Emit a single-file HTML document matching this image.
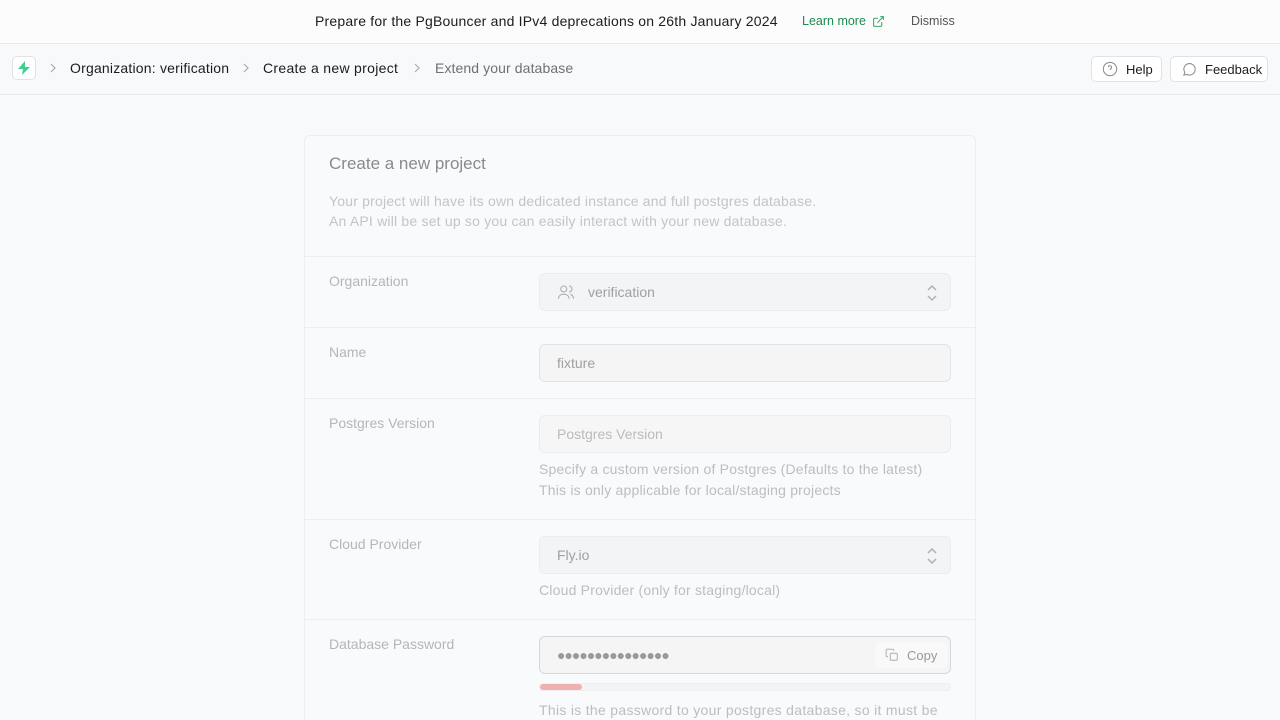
<!DOCTYPE html>
<html style="overflow:hidden;height:720px"><head><meta charset="utf-8"><style>
*{box-sizing:border-box;margin:0;padding:0}
body{width:1280px;height:720px;overflow:hidden;background:#f8f9fa;font-family:"Liberation Sans",sans-serif;color:#1c1c1c;position:relative}
.banner{position:absolute;left:0;top:0;width:1280px;height:44px;background:#fcfcfd;border-bottom:1px solid #e6e8eb}
.abs{position:absolute;white-space:nowrap}
.nav{position:absolute;left:0;top:44px;width:1280px;height:51px;border-bottom:1px solid #e6e8eb;background:#f8f9fa}
.btn{position:absolute;height:26px;border:1px solid #dfe3e6;border-radius:5px;background:#fff;font-size:13px;display:flex;align-items:center}
.card{position:absolute;left:304px;top:135px;width:672px;height:585px;overflow:hidden;border:1px solid #eceef0;border-bottom:none;border-radius:6px 6px 0 0;background:#f9fafb}
.row{position:absolute;left:0;width:670px;border-top:1px solid #eceef0}
.lbl{position:absolute;left:24px;top:16px;font-size:14px;color:#b4b6b8}
.inp{position:absolute;left:234px;width:412px;height:38px;border:1px solid #e2e3e5;border-radius:6px;background:#f5f5f6;font-size:14px;color:#a0a0a0;display:flex;align-items:center;padding-left:17px}
.help{position:absolute;left:234px;font-size:14px;color:#bbbdbf;line-height:21px}
.chev{position:absolute;right:12px;top:10px}
.bc{position:absolute;top:18px}
</style></head><body>
<div class="banner">
<div class="abs" style="left:315px;top:13px;font-size:14px;color:#1c1c1c;letter-spacing:0.2px">Prepare for the PgBouncer and IPv4 deprecations on 26th January 2024</div>
<div class="abs" style="left:802px;top:14px;font-size:12.5px;color:#1f8a52">Learn more</div>
<svg class="abs" style="left:872px;top:15px" width="13" height="13" viewBox="0 0 24 24" fill="none" stroke="#3aa76d" stroke-width="2"><path d="M18 13v6a2 2 0 0 1-2 2H5a2 2 0 0 1-2-2V8a2 2 0 0 1 2-2h6M15 3h6v6M10 14L21 3"/></svg>
<div class="abs" style="left:911px;top:14px;font-size:12.5px;color:#555">Dismiss</div>
</div>
<div class="nav">
<div class="abs" style="left:12px;top:12px;width:24px;height:24px;border:1px solid #e0e2e4;border-radius:5px;background:#fff"></div>
<svg class="abs" style="left:16px;top:16px" width="16" height="16" viewBox="0 0 16 16"><path d="M9 1L2 9h5l-1 6 8-8H9z" fill="#3ecf8e"/></svg>
<svg class="bc" style="left:48px" width="10" height="12" viewBox="0 0 10 12" fill="none" stroke="#aaa" stroke-width="1.2"><path d="M3 2l4 4-4 4"/></svg>
<div class="abs" style="left:70px;top:16px;font-size:14px;letter-spacing:0.2px">Organization: verification</div>
<svg class="bc" style="left:241px" width="10" height="12" viewBox="0 0 10 12" fill="none" stroke="#aaa" stroke-width="1.2"><path d="M3 2l4 4-4 4"/></svg>
<div class="abs" style="left:263px;top:16px;font-size:14px;letter-spacing:0.3px">Create a new project</div>
<svg class="bc" style="left:412px" width="10" height="12" viewBox="0 0 10 12" fill="none" stroke="#aaa" stroke-width="1.2"><path d="M3 2l4 4-4 4"/></svg>
<div class="abs" style="left:435px;top:16px;font-size:14px;color:#707070;letter-spacing:0.1px">Extend your database</div>
<div class="btn" style="left:1091px;top:12px;width:71px"><svg style="margin-left:10px" width="16" height="16" viewBox="0 0 24 24" fill="none" stroke="#888" stroke-width="1.5"><circle cx="12" cy="12" r="10"/><path d="M9.5 9a2.5 2.5 0 0 1 4.9.8c0 1.7-2.4 2.2-2.4 3.7M12 17h.01"/></svg><span style="margin-left:8px">Help</span></div>
<div class="btn" style="left:1170px;top:12px;width:98px"><svg style="margin-left:11px" width="15" height="15" viewBox="0 0 24 24" fill="none" stroke="#888" stroke-width="1.6"><path d="M21 12a9 9 0 0 1-13 8l-5 1 1.5-4.5A9 9 0 1 1 21 12z"/></svg><span style="margin-left:8px">Feedback</span></div>
</div>
<div class="card">
<div class="abs" style="left:24px;top:18px;font-size:17px;color:#8a8a8a">Create a new project</div>
<div class="abs" style="left:24px;top:55px;font-size:14px;color:#c2c4c6;line-height:20px;letter-spacing:0.2px">Your project will have its own dedicated instance and full postgres database.<br>An API will be set up so you can easily interact with your new database.</div>
<div class="row" style="top:120px;height:71px"><div class="lbl">Organization</div>
<div class="inp" style="top:16px;background:#f3f4f5;border-color:#ebecee"><svg width="18" height="18" viewBox="0 0 24 24" fill="none" stroke="#aaa" stroke-width="1.4"><circle cx="9" cy="8" r="4"/><path d="M2 21c0-4 3-6 7-6s7 2 7 6M16 4a4 4 0 0 1 0 8M22 21c0-3-2-5-4-6"/></svg><span style="margin-left:13px">verification</span><svg class="chev" width="12" height="18" viewBox="0 0 12 18" fill="none" stroke="#b0b0b0" stroke-width="1.5"><path d="M2 6l4-4 4 4M2 12l4 4 4-4"/></svg></div></div>
<div class="row" style="top:191px;height:71px"><div class="lbl">Name</div><div class="inp" style="top:16px">fixture</div></div>
<div class="row" style="top:262px;height:121px"><div class="lbl">Postgres Version</div><div class="inp" style="top:16px;color:#bbb;background:#f6f6f7;border-color:#ebecee">Postgres Version</div>
<div class="help" style="top:60px;letter-spacing:0.2px">Specify a custom version of Postgres (Defaults to the latest)<br>This is only applicable for local/staging projects</div></div>
<div class="row" style="top:383px;height:100px"><div class="lbl">Cloud Provider</div><div class="inp" style="top:16px;background:#f3f4f5;border-color:#ebecee">Fly.io<svg class="chev" width="12" height="18" viewBox="0 0 12 18" fill="none" stroke="#b0b0b0" stroke-width="1.5"><path d="M2 6l4-4 4 4M2 12l4 4 4-4"/></svg></div>
<div class="help" style="top:60px;letter-spacing:0.2px">Cloud Provider (only for staging/local)</div></div>
<div class="row" style="top:483px;height:102px"><div class="lbl">Database Password</div>
<div class="inp" style="top:16px;border-color:#d6d7d9;letter-spacing:-1px;color:#999">●●●●●●●●●●●●●●●
<div style="position:absolute;right:3px;top:5px;width:72px;height:26px;background:#f9f9fa;border-radius:5px;display:flex;align-items:center;font-size:13px;color:#999;letter-spacing:0"><svg style="margin-left:10px" width="14" height="14" viewBox="0 0 24 24" fill="none" stroke="#aaa" stroke-width="1.6"><rect x="9" y="9" width="12" height="12" rx="2"/><path d="M5 15H4a2 2 0 0 1-2-2V4a2 2 0 0 1 2-2h9a2 2 0 0 1 2 2v1"/></svg><span style="margin-left:8px">Copy</span></div></div>
<div class="abs" style="left:234px;top:63px;width:412px;height:8px;border-radius:4px;background:#f3f4f5;border:1px solid #eee"><div style="width:42px;height:6px;background:#efb0b2;border-radius:3px"></div></div>
<div class="help" style="top:80px;letter-spacing:0.3px">This is the password to your postgres database, so it must be</div></div>
</div>
</body></html>
